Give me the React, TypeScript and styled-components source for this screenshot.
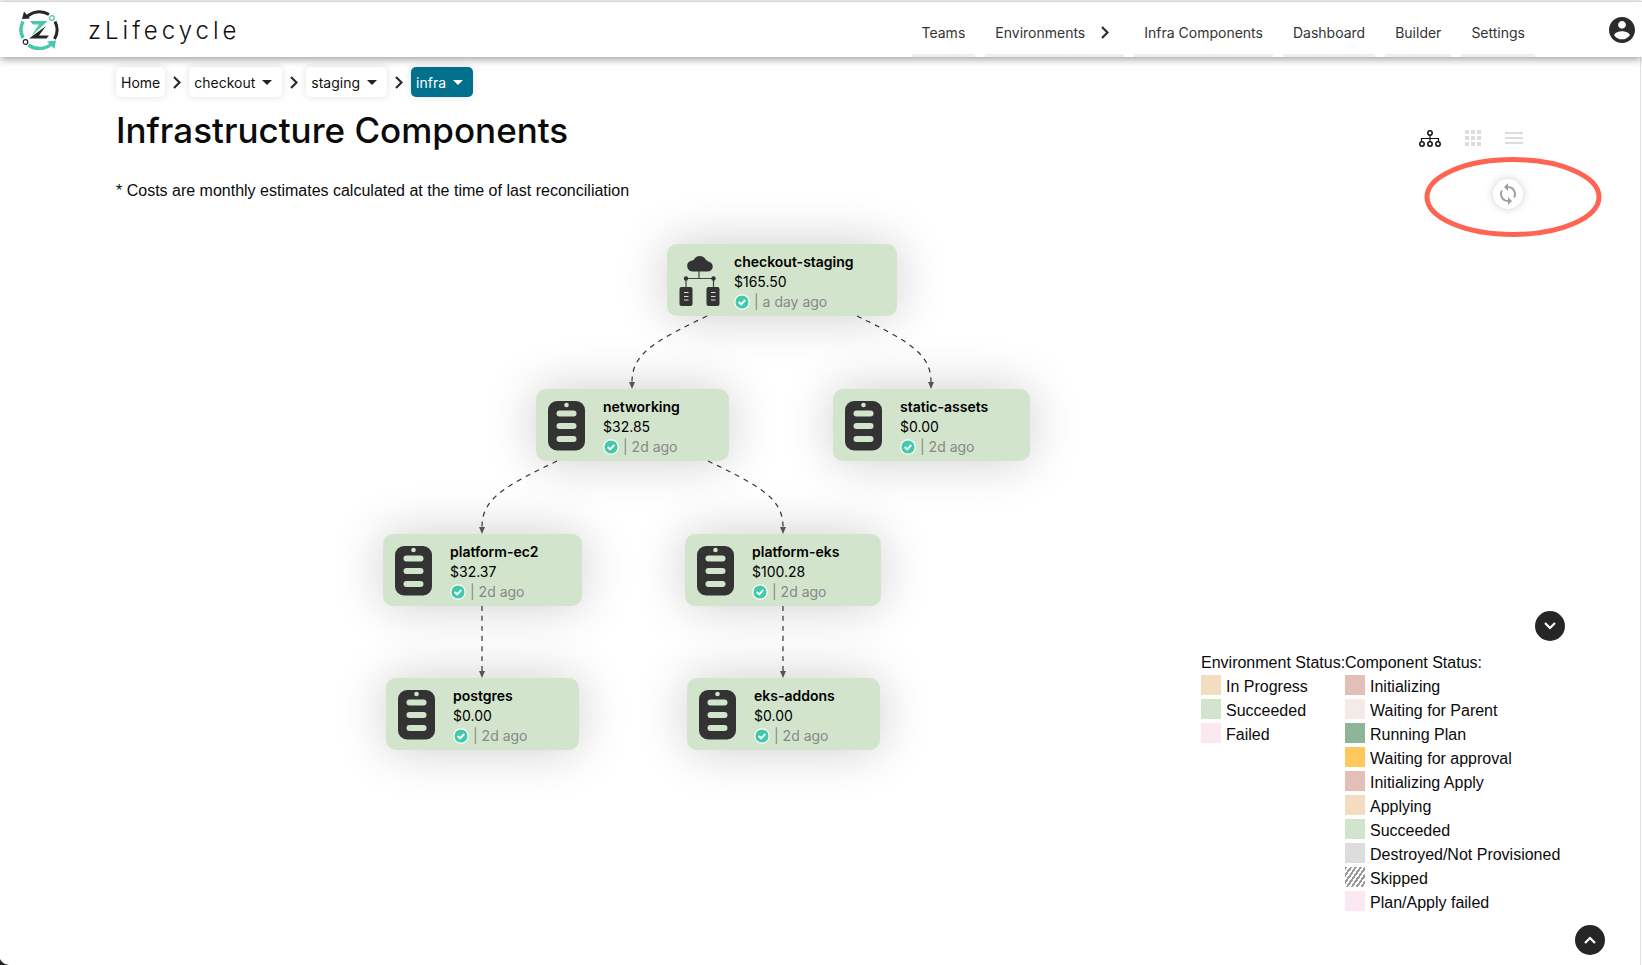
import React from 'react';
import styled, { createGlobalStyle } from 'styled-components';

const GlobalStyle = createGlobalStyle`
  *, *::before, *::after { box-sizing: border-box; }
  body {
    margin: 0;
    background: #fff;
    color: #0b0b0b;
    font-family: "Liberation Sans", Arial, sans-serif;
    font-size: 16px;
  }
  button { border: 0; padding: 0; background: none; font: inherit; color: inherit; cursor: pointer; }
  ul { list-style: none; margin: 0; padding: 0; }
`;

const uiFont = 'Inter, "Open Sans", sans-serif';

const Page = styled.div`
  min-height: 100vh;
  display: flex;
  flex-direction: column;
  padding-top: 1px;
`;

const Header = styled.header`
  position: relative;
  z-index: 1;
  display: flex;
  align-items: center;
  height: 56px;
  padding: 1px 7px 0 19px;
  background: #fff;
  border-top: 1px solid #d6d8d8;
  box-shadow: 0 2px 8px rgba(0, 0, 0, 0.4);
  font-family: ${uiFont};
`;

const Brand = styled.a`
  display: flex;
  align-items: center;
  gap: 29px;
  color: #111;
  text-decoration: none;
  font-size: 24px;
  font-weight: 300;
  letter-spacing: 4px;
`;

const Nav = styled.nav`
  display: flex;
  align-self: stretch;
  gap: 10px;
  margin-left: auto;
  margin-right: 74px;
`;

const NavLink = styled.a`
  display: flex;
  align-items: center;
  gap: 16px;
  padding: 8px 10px 0;
  border-bottom: 3px solid #eee;
  color: #333;
  text-decoration: none;
  font-size: 14px;
  svg { margin-right: 5px; }
`;

const AccountButton = styled.button`
  display: flex;
`;

const Main = styled.main`
  flex: 1;
  display: flex;
  flex-direction: column;
  margin-right: 1px;
  padding: 10px 75px 0 116px;
  border-right: 1px solid #e4e4e4;
`;

const Breadcrumbs = styled.nav`
  display: flex;
  align-items: center;
  gap: 8px;
  font-family: ${uiFont};
  font-size: 14px;
`;

const Crumb = styled.button<{ $active?: boolean }>`
  display: flex;
  align-items: center;
  gap: 7px;
  height: 30px;
  padding: 0 5px;
  border-radius: 5px;
  background: ${(p) => (p.$active ? '#00708c' : '#fff')};
  color: ${(p) => (p.$active ? '#fff' : '#111')};
  box-shadow: 0 0 8px rgba(0, 0, 0, 0.12);
  svg { margin-right: 5px; }
`;

const TitleBar = styled.div`
  display: flex;
  justify-content: space-between;
  margin-top: 8px;
  padding-right: 42px;
`;

const Title = styled.h1`
  margin: 0;
  font-family: ${uiFont};
  font-size: 35px;
  font-weight: 550;
  line-height: 50px;
`;

const ViewSwitch = styled.div`
  display: flex;
  align-items: center;
  align-self: flex-end;
  gap: 24px;
  height: 24px;
  margin-bottom: 5px;
`;

const ViewButton = styled.button<{ $active?: boolean }>`
  display: flex;
  color: ${(p) => (p.$active ? '#111' : '#ddd')};
`;

const NoteBar = styled.div`
  display: flex;
  justify-content: space-between;
  align-items: flex-start;
  height: 82px;
`;

const Note = styled.p`
  margin: 26px 0 0;
  line-height: 20px;
`;

const SyncMark = styled.div`
  position: relative;
  display: flex;
  justify-content: center;
  width: 176px;
  margin-top: 2px;
  margin-right: -36px;
  padding-top: 22px;
  padding-right: 10px;
`;

const MarkRing = styled.svg`
  position: absolute;
  inset: 0;
  overflow: visible;
  pointer-events: none;
`;

const SyncButton = styled.button`
  display: flex;
  align-items: center;
  justify-content: center;
  width: 30px;
  height: 30px;
  border-radius: 50%;
  background: #fff;
  color: #a0a0a0;
  box-shadow: 0 0 8px rgba(0, 0, 0, 0.2);
`;

const Workspace = styled.div`
  flex: 1;
  display: flex;
  justify-content: space-between;
  align-items: flex-start;
`;

const Canvas = styled.section`
  position: relative;
  flex: 1;
  height: 560px;
`;

const Edges = styled.svg`
  position: absolute;
  left: 0;
  top: 0;
  overflow: visible;
`;

const Node = styled.article<{ $x: number; $y: number; $w: number }>`
  position: absolute;
  left: ${(p) => p.$x}px;
  top: ${(p) => p.$y}px;
  width: ${(p) => p.$w}px;
  height: 72px;
  display: flex;
  gap: 13px;
  padding: 8px 12px;
  border-radius: 10px;
  background: #d2e4cc;
  box-shadow: 0 0 50px rgba(0, 0, 0, 0.2);
  font-family: ${uiFont};
  font-size: 14px;
  line-height: 20px;
`;

const NodeIcon = styled.div`
  display: flex;
  width: 42px;
  padding-top: 4px;
`;

const NodeName = styled.div`
  font-weight: 600;
  color: #000;
  white-space: nowrap;
`;

const NodeCost = styled.div`
  color: #000;
`;

const NodeStatus = styled.div`
  display: flex;
  align-items: center;
  gap: 4px;
  color: #888;
  white-space: nowrap;
`;

const Legend = styled.aside`
  display: flex;
  flex-direction: column;
  align-items: flex-end;
  margin-top: 374px;
`;

const LegendColumns = styled.div`
  display: flex;
  margin-top: 10px;
  width: 364px;
`;

const LegendGroup = styled.section`
  flex: none;
  width: 144px;
  white-space: nowrap;
`;

const LegendTitle = styled.h2`
  margin: 0;
  font-size: 16px;
  font-weight: 400;
  line-height: 24px;
`;

const LegendItem = styled.li`
  display: flex;
  gap: 5px;
  height: 24px;
  line-height: 24px;
`;

const Swatch = styled.span<{ $fill: string }>`
  flex: none;
  width: 20px;
  height: 20px;
  background: ${(p) => p.$fill};
`;

const RoundButton = styled.button<{ $floating?: boolean }>`
  display: flex;
  align-items: center;
  justify-content: center;
  width: 30px;
  height: 30px;
  border-radius: 50%;
  background: #262626;
  color: #fff;
  ${(p) => p.$floating && 'position: fixed; right: 37px; bottom: 10px;'}
`;

const Corner = styled.svg`
  position: fixed;
  left: 0;
  bottom: 0;
`;

const Logo = () => (
  <svg width="40" height="40" viewBox="0 0 40 40" fill="none">
    <path d="M7 7.5A18.3 18.3 0 0 1 30 4.5" stroke="#262626" strokeWidth="3" />
    <path d="M3 9 5 1.5 11 8.5z" fill="#262626" />
    <path d="M36 11.5A18.3 18.3 0 0 1 35.5 29" stroke="#262626" strokeWidth="3" />
    <path d="M4 11.5A18.3 18.3 0 0 0 4 28" stroke="#47c9a9" strokeWidth="3.5" />
    <path d="M9.5 35A18.3 18.3 0 0 0 32.5 34" stroke="#47c9a9" strokeWidth="3.5" />
    <path d="M28 31.500 37 30.500 35.500 39z" fill="#47c9a9" />
    <circle cx="33" cy="8" r="2.300" stroke="#47c9a9" strokeWidth="1.200" />
    <circle cx="6.500" cy="32" r="2.300" stroke="#262626" strokeWidth="1.200" />
    <path d="M11 11H28.500L12 26.500 20 14.500H14z" fill="#47c9a9" />
    <path d="M27 16 20 25.500H30L27.500 28.500H10z" fill="#262626" />
  </svg>
);

const ChevronRight = () => (
  <svg width="8" height="13" viewBox="0 0 8 13" fill="none" stroke="#2c2c2c" strokeWidth="2.2">
    <path d="M1 1 6.5 6.5 1 12" />
  </svg>
);

const Caret = ({ color = '#222' }: { color?: string }) => (
  <svg width="10" height="5" viewBox="0 0 10 5" fill={color}>
    <path d="M0 0H10L5 5z" />
  </svg>
);

const Avatar = () => (
  <svg width="26" height="26" viewBox="2 2 20 20" fill="#2b2b2b">
    <path d="M12 2C6.480 2 2 6.480 2 12s4.480 10 10 10 10-4.480 10-10S17.520 2 12 2zm0 3c1.660 0 3 1.340 3 3s-1.340 3-3 3-3-1.340-3-3 1.340-3 3-3zm0 14.200c-2.500 0-4.710-1.280-6-3.220.030-1.990 4-3.080 6-3.080 1.990 0 5.970 1.090 6 3.080-1.290 1.940-3.500 3.220-6 3.220z" />
  </svg>
);

const TreeIcon = () => (
  <svg width="22" height="17" viewBox="0 0 22 17" fill="none" stroke="currentColor" strokeWidth="1.5">
    <circle cx="11" cy="3" r="2.2" />
    <circle cx="3" cy="14" r="2.2" />
    <circle cx="11" cy="14" r="2.2" />
    <circle cx="19" cy="14" r="2.2" />
    <path d="M11 5V11.5M2.5 11V8.5H19.5V11" strokeWidth="1.2" />
  </svg>
);

const GridIcon = () => (
  <svg width="16" height="16" viewBox="0 0 16 16" fill="currentColor">
    {[0, 6, 12].map((y) => [0, 6, 12].map((x) => <rect key={`${x}-${y}`} x={x} y={y} width="4" height="4" />))}
  </svg>
);

const ListIcon = () => (
  <svg width="18" height="12" viewBox="0 0 18 12" fill="currentColor">
    <path d="M0 0H18V2H0zM0 5H18V7H0zM0 10H18V12H0z" />
  </svg>
);

const SyncIcon = () => (
  <svg width="24" height="24" viewBox="0 0 24 24" fill="currentColor">
    <path d="M12 4V1L8 5l4 4V6c3.310 0 6 2.690 6 6 0 1.010-.250 1.970-.700 2.800l1.460 1.460C19.540 15.030 20 13.570 20 12c0-4.420-3.580-8-8-8zm0 14c-3.310 0-6-2.690-6-6 0-1.010.250-1.970.700-2.800L5.240 7.740C4.460 8.970 4 10.430 4 12c0 4.420 3.580 8 8 8v3l4-4-4-4v3z" />
  </svg>
);

const EnvironmentIcon = () => (
  <svg width="41" height="50" viewBox="0 0 41 50" fill="#333">
    <path d="M13 15.5a5.500 5.500 0 0 1-1.500-10.500q2-.500 3-1Q17 0 20.500 0 25 0 27 4q1.500.200 2 1.500a5 5 0 0 1-.500 10z" />
    <path d="M20 15V22.500M7 31V22.500H34.500V31" fill="none" stroke="#444" strokeWidth="1.2" />
    <circle cx="7" cy="22.500" r="2.200" />
    <circle cx="34.500" cy="22.500" r="2.200" />
    <rect x="0.500" y="31" width="13" height="19" rx="2" />
    <rect x="27.500" y="31" width="13" height="19" rx="2" />
    <path d="M5 36.500H9.500M5 40.500H9.500M5 44H9.500M32 36.500H36.500M32 40.500H36.500M32 44H36.500" stroke="#d2e4cc" strokeWidth="1.2" />
  </svg>
);

const ComponentIcon = () => (
  <svg width="37" height="50" viewBox="0 0 37 50">
    <rect width="37" height="49.5" rx="9" fill="#333" />
    <g fill="#d2e4cc">
      <circle cx="18.5" cy="4" r="2.3" />
      <rect x="8.5" y="9.5" width="20" height="6" rx="3" />
      <rect x="8.5" y="22" width="20" height="6" rx="3" />
      <rect x="8.5" y="35" width="20" height="6" rx="3" />
    </g>
  </svg>
);

const CheckIcon = () => (
  <svg width="16" height="16" viewBox="0 0 16 16">
    <circle cx="8" cy="8" r="7.2" fill="#43c9a9" stroke="#fff" strokeWidth="1.2" />
    <path d="M4.700 8 7.100 10.300 11.300 6" fill="none" stroke="#fff" strokeWidth="1.900" />
  </svg>
);

const Chevron = ({ up }: { up?: boolean }) => (
  <svg width="12" height="8" viewBox="0 0 12 8" fill="none" stroke="#fff" strokeWidth="2.2">
    <path d={up ? 'M1 7 6 2 11 7' : 'M1 1 6 6 11 1'} />
  </svg>
);

const navItems = ['Teams', 'Environments', 'Infra Components', 'Dashboard', 'Builder', 'Settings'];

const crumbs = [
  { label: 'Home' },
  { label: 'checkout', menu: true },
  { label: 'staging', menu: true },
  { label: 'infra', menu: true, active: true },
];

const nodes = [
  { name: 'checkout-staging', cost: '$165.50', age: 'a day ago', x: 551, y: 7, w: 230, root: true },
  { name: 'networking', cost: '$32.85', age: '2d ago', x: 420, y: 152, w: 193 },
  { name: 'static-assets', cost: '$0.00', age: '2d ago', x: 717, y: 152, w: 197 },
  { name: 'platform-ec2', cost: '$32.37', age: '2d ago', x: 267, y: 297, w: 199 },
  { name: 'platform-eks', cost: '$100.28', age: '2d ago', x: 569, y: 297, w: 196 },
  { name: 'postgres', cost: '$0.00', age: '2d ago', x: 270, y: 441, w: 193 },
  { name: 'eks-addons', cost: '$0.00', age: '2d ago', x: 571, y: 441, w: 193 },
];

const edges = [
  { x1: 591, y1: 79, x2: 516, y2: 152 },
  { x1: 741, y1: 79, x2: 815, y2: 152 },
  { x1: 441, y1: 224, x2: 366, y2: 297 },
  { x1: 592, y1: 224, x2: 667, y2: 297 },
  { x1: 366, y1: 369, x2: 366, y2: 441 },
  { x1: 667, y1: 369, x2: 667, y2: 441 },
];

// B-spline through the start, the bend above the target, and the target.
const edgePath = ({ x1, y1, x2, y2 }: (typeof edges)[number]) => {
  const my = (y1 + y2) / 2;
  const bend = (x1 + 5 * x2) / 6;
  return [
    `M${x1} ${y1}`,
    `L${(5 * x1 + x2) / 6} ${(5 * y1 + my) / 6}`,
    `C${(2 * x1 + x2) / 3} ${(2 * y1 + my) / 3} ${(x1 + 2 * x2) / 3} ${(y1 + 2 * my) / 3} ${bend} ${my}`,
    `C${x2} ${(2 * my + y2) / 3} ${x2} ${(my + 2 * y2) / 3} ${x2} ${y2 - 6}`,
  ].join('');
};

const hatch = 'repeating-linear-gradient(125deg, #999 0 2px, #fff 2px 4px)';

const legend = [
  {
    title: 'Environment Status:',
    items: [
      ['In Progress', '#f3dcc0'],
      ['Succeeded', '#d2e4cc'],
      ['Failed', '#fce8f1'],
    ],
  },
  {
    title: 'Component Status:',
    items: [
      ['Initializing', '#e2c0b8'],
      ['Waiting for Parent', '#f4eae8'],
      ['Running Plan', '#8eb597'],
      ['Waiting for approval', '#fec85d'],
      ['Initializing Apply', '#e2c0b8'],
      ['Applying', '#f3dcc0'],
      ['Succeeded', '#d2e4cc'],
      ['Destroyed/Not Provisioned', '#ddd'],
      ['Skipped', hatch],
      ['Plan/Apply failed', '#fce8f1'],
    ],
  },
];

export default function App() {
  return (
    <Page>
      <GlobalStyle />
      <Header>
        <Brand href="#home">
          <Logo />
          zLifecycle
        </Brand>
        <Nav aria-label="Main">
          {navItems.map((item) => (
            <NavLink key={item} href="#nav">
              {item}
              {item === 'Environments' && <ChevronRight />}
            </NavLink>
          ))}
        </Nav>
        <AccountButton aria-label="Account">
          <Avatar />
        </AccountButton>
      </Header>
      <Main>
        <Breadcrumbs aria-label="Breadcrumb">
          {crumbs.map((crumb, i) => (
            <React.Fragment key={crumb.label}>
              {i > 0 && <ChevronRight />}
              <Crumb $active={crumb.active}>
                {crumb.label}
                {crumb.menu && <Caret color={crumb.active ? '#fff' : '#222'} />}
              </Crumb>
            </React.Fragment>
          ))}
        </Breadcrumbs>
        <TitleBar>
          <Title>Infrastructure Components</Title>
          <ViewSwitch>
            <ViewButton $active aria-label="Tree view"><TreeIcon /></ViewButton>
            <ViewButton aria-label="Grid view"><GridIcon /></ViewButton>
            <ViewButton aria-label="List view"><ListIcon /></ViewButton>
          </ViewSwitch>
        </TitleBar>
        <NoteBar>
          <Note>* Costs are monthly estimates calculated at the time of last reconciliation</Note>
          <SyncMark>
            <SyncButton aria-label="Refresh"><SyncIcon /></SyncButton>
            <MarkRing width="176" height="80" viewBox="0 0 176 80" fill="none">
              <ellipse cx="88" cy="40" rx="86" ry="37.5" stroke="#ff6452" strokeWidth="5" />
            </MarkRing>
          </SyncMark>
        </NoteBar>
        <Workspace>
          <Canvas aria-label="Infrastructure graph">
            {nodes.map((n) => (
              <Node key={n.name} $x={n.x} $y={n.y} $w={n.w}>
                <NodeIcon>{n.root ? <EnvironmentIcon /> : <ComponentIcon />}</NodeIcon>
                <div>
                  <NodeName>{n.name}</NodeName>
                  <NodeCost>{n.cost}</NodeCost>
                  <NodeStatus>
                    <CheckIcon />| {n.age}
                  </NodeStatus>
                </div>
              </Node>
            ))}
            <Edges width="914" height="513">
              {edges.map((e) => (
                <g key={`${e.x1}-${e.y1}`}>
                  <path d={edgePath(e)} fill="none" stroke="#333" strokeWidth="1.2" strokeDasharray="5 5" />
                  <path d={`M${e.x2 - 3} ${e.y2 - 7}h6l-3 7z`} fill="#555" />
                </g>
              ))}
            </Edges>
          </Canvas>
          <Legend>
            <RoundButton aria-label="Hide legend"><Chevron /></RoundButton>
            <LegendColumns>
              {legend.map((group) => (
                <LegendGroup key={group.title}>
                  <LegendTitle>{group.title}</LegendTitle>
                  <ul>
                    {group.items.map(([label, fill]) => (
                      <LegendItem key={label}>
                        <Swatch $fill={fill} />
                        {label}
                      </LegendItem>
                    ))}
                  </ul>
                </LegendGroup>
              ))}
            </LegendColumns>
          </Legend>
        </Workspace>
      </Main>
      <RoundButton $floating aria-label="Back to top"><Chevron up /></RoundButton>
      <Corner width="9" height="6" viewBox="0 0 9 6" fill="#222">
        <path d="M0 0Q2 5 9 6H0z" />
      </Corner>
    </Page>
  );
}
